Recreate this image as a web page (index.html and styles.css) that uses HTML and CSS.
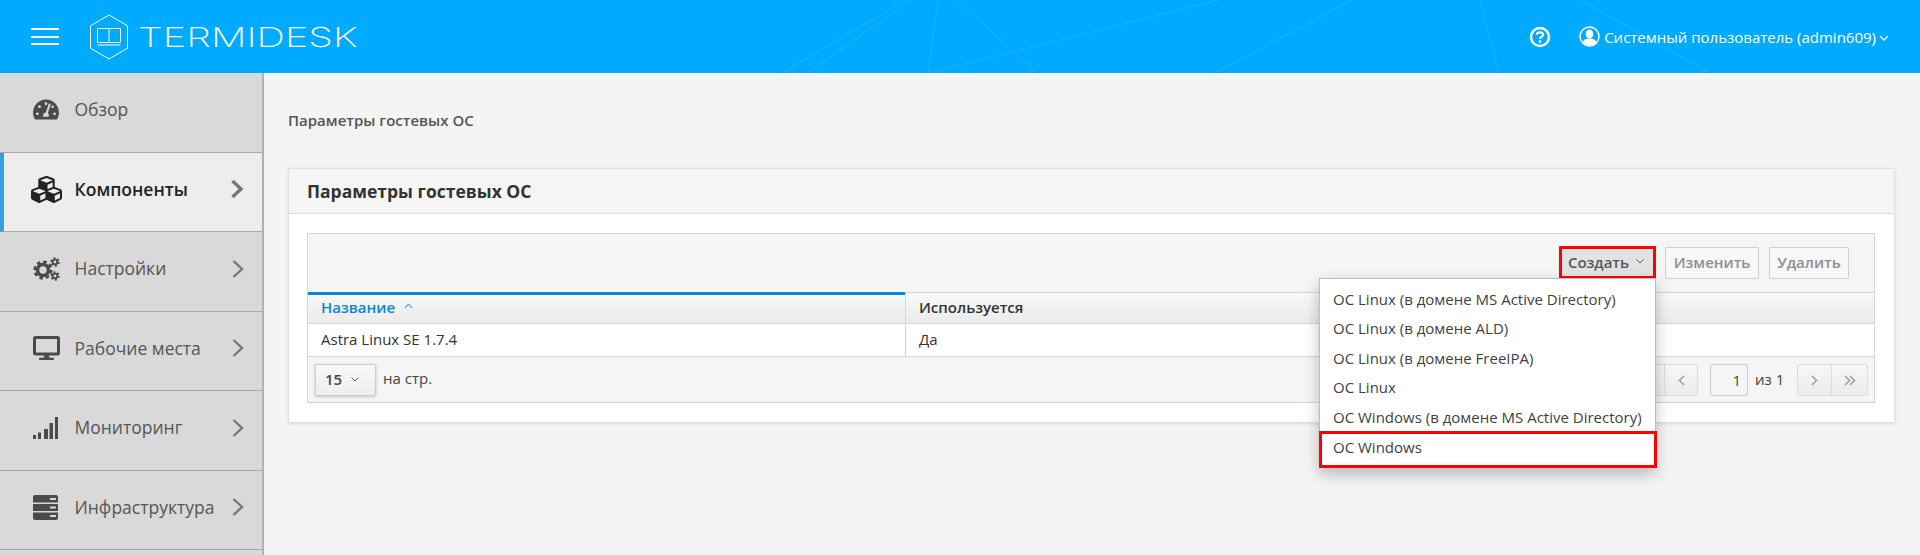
FILE: index.html
```html
<!DOCTYPE html>
<html lang="ru">
<head>
<meta charset="utf-8">
<title>Termidesk</title>
<link rel="stylesheet" href="styles.css">
</head>
<body>
<header class="topbar">
  <svg class="topbar-lines" width="1920" height="73" viewBox="0 0 1920 73">
    <path d="M782 73L906 0M807 73L912 0M928 73L938 0M1037 73L957 0M928 73L1219 0M1215 73L1352 0M1499 73L1480 0M1580 0L1710 73"/>
  </svg>
  <button class="burger" aria-label="Меню"><span></span><span></span><span></span></button>
  <div class="brand">
    <svg class="brand-mark" width="40" height="46" viewBox="0 0 40 46">
      <path d="M20 1L38.500 11.800V34.200L20 45L1.500 34.200V11.800Z"/>
      <path d="M8.500 14.500H31.500V28.500H8.500ZM20 14.500V28.500M8.500 31H31.500" stroke-width="1.300"/>
    </svg>
    <span class="brand-name">TERMIDESK</span>
  </div>
  <div class="topbar-right">
    <svg class="help" width="22" height="22" viewBox="0 0 22 22">
      <circle cx="11" cy="11" r="9" fill="none" stroke="#fff" stroke-width="2.400"/>
      <path d="M7.800 8.800C7.800 5.600 14.200 5.600 14.200 8.800C14.200 10.800 11 10.600 11 13" fill="none" stroke="#fff" stroke-width="2.200"/>
      <rect x="9.800" y="14.300" width="2.400" height="2.400" fill="#fff"/>
    </svg>
    <span class="user">
      <svg width="21" height="21" viewBox="0 0 21 21">
        <circle cx="10.500" cy="10.500" r="9.500" fill="none" stroke="#fff" stroke-width="1.500"/>
        <ellipse cx="10.500" cy="8" rx="3.800" ry="4.500" fill="#fff"/>
        <path d="M3.500 17C4 13.500 7 12.500 10.500 12.500S17 13.500 17.500 17C15.500 19 13 20 10.500 20S5.500 19 3.500 17Z" fill="#fff"/>
      </svg>
      <span class="user-name">Системный пользователь (admin609)</span>
      <svg class="user-caret" width="10" height="6" viewBox="0 0 10 6"><path d="M1 1L5 5L9 1"/></svg>
    </span>
  </div>
</header>
<div class="layout">
  <nav class="sidebar">
    <a class="nav-item">
      <svg class="nav-icon" width="26" height="23" viewBox="0 0 576 512"><path d="M288 32C128.940 32 0 160.940 0 320c0 52.800 14.250 102.260 39.060 144.800 5.610 9.620 16.300 15.200 27.440 15.200h443c11.140 0 21.830-5.580 27.440-15.200C561.750 422.260 576 372.800 576 320c0-159.060-128.940-288-288-288zm0 64c14.710 0 26.580 10.130 30.320 23.650-1.110 2.260-2.640 4.230-3.450 6.670l-9.220 27.670c-5.130 3.490-10.970 6.010-17.640 6.010-17.670 0-32-14.330-32-32S270.330 96 288 96zM96 384c-17.670 0-32-14.330-32-32s14.330-32 32-32 32 14.330 32 32-14.330 32-32 32zm48-160c-17.670 0-32-14.330-32-32s14.330-32 32-32 32 14.330 32 32-14.330 32-32 32zm246.770-72.410l-61.330 184C343.130 347.330 352 364.540 352 384c0 11.720-3.380 22.550-8.880 32H232.880c-5.500-9.450-8.880-20.280-8.880-32 0-33.940 26.500-61.430 59.900-63.590l61.340-184.010c4.170-12.560 17.730-19.450 30.360-15.170 12.570 4.190 19.350 17.770 15.170 30.360zm14.660 57.200l15.520-46.550c3.470-1.290 7.130-2.230 11.050-2.230 17.670 0 32 14.330 32 32s-14.330 32-32 32c-11.380-.010-20.890-6.280-26.570-15.220zM480 384c-17.670 0-32-14.330-32-32s14.330-32 32-32 32 14.330 32 32-14.330 32-32 32z"/></svg>
      <span class="nav-label">Обзор</span>
    </a>
    <a class="nav-item is-active">
      <svg class="nav-icon" width="31" height="31" viewBox="0 0 512 512"><path d="M488.600 250.200L392 214V105.500c0-15-9.300-28.400-23.400-33.700l-100-37.500c-8.100-3.100-17.100-3.100-25.300 0l-100 37.500c-14.100 5.300-23.400 18.700-23.400 33.700V214l-96.600 36.200C9.300 255.500 0 268.900 0 283.900V394c0 13.600 7.700 26.100 19.900 32.200l100 50c10.100 5.100 22.100 5.100 32.200 0l103.900-52 103.900 52c10.100 5.100 22.100 5.100 32.200 0l100-50c12.200-6.100 19.900-18.600 19.900-32.200V283.900c0-15-9.300-28.400-23.400-33.700zM358 214.800l-85 31.900v-68.200l85-37v73.300zM154 104.100l102-38.200 102 38.200v.6l-102 41.400-102-41.400v-.6zm84 291.100l-85 42.500v-79.100l85-38.800v75.400zm0-112l-102 41.400-102-41.400v-.6l102-38.200 102 38.200v.6zm240 112l-85 42.500v-79.100l85-38.800v75.400zm0-112l-102 41.400-102-41.400v-.6l102-38.200 102 38.200v.6z"/></svg>
      <span class="nav-label">Компоненты</span>
      <svg class="nav-chevron" width="14" height="20" viewBox="0 0 14 20"><path d="M2.500 2L11 10L2.500 18"/></svg>
    </a>
    <a class="nav-item">
      <svg class="nav-icon" width="27" height="24" viewBox="0 0 27 24">
        <circle cx="10" cy="13" r="5.500" fill="none" stroke="#4a4a4a" stroke-width="3.600"/>
        <circle cx="10" cy="13" r="8.300" fill="none" stroke="#4a4a4a" stroke-width="2.600" stroke-dasharray="3.600 2.900"/>
        <circle cx="22" cy="5" r="2.300" fill="none" stroke="#4a4a4a" stroke-width="1.800"/>
        <circle cx="22" cy="5" r="3.900" fill="none" stroke="#4a4a4a" stroke-width="1.700" stroke-dasharray="2 2.080"/>
        <circle cx="22" cy="19" r="2.300" fill="none" stroke="#4a4a4a" stroke-width="1.800"/>
        <circle cx="22" cy="19" r="3.900" fill="none" stroke="#4a4a4a" stroke-width="1.700" stroke-dasharray="2 2.080"/>
      </svg>
      <span class="nav-label">Настройки</span>
      <svg class="nav-chevron" width="14" height="20" viewBox="0 0 14 20"><path d="M2.500 2L11 10L2.500 18"/></svg>
    </a>
    <a class="nav-item">
      <svg class="nav-icon" width="27" height="24" viewBox="0 0 576 512"><path d="M528 0H48C21.500 0 0 21.500 0 48v320c0 26.500 21.500 48 48 48h192l-16 48h-72c-13.300 0-24 10.700-24 24s10.700 24 24 24h272c13.300 0 24-10.700 24-24s-10.700-24-24-24h-72l-16-48h192c26.500 0 48-21.500 48-48V48c0-26.500-21.500-48-48-48zm-16 352H64V64h448v288z"/></svg>
      <span class="nav-label">Рабочие места</span>
      <svg class="nav-chevron" width="14" height="20" viewBox="0 0 14 20"><path d="M2.500 2L11 10L2.500 18"/></svg>
    </a>
    <a class="nav-item">
      <svg class="nav-icon" width="25" height="22" viewBox="0 0 25 22"><path d="M0 18h3v4H0zM5 15.500h3V22H5zM11 12h4v10h-4zM16.500 6h3.500v16h-3.500zM22 0h3v22h-3z"/></svg>
      <span class="nav-label">Мониторинг</span>
      <svg class="nav-chevron" width="14" height="20" viewBox="0 0 14 20"><path d="M2.500 2L11 10L2.500 18"/></svg>
    </a>
    <a class="nav-item">
      <svg class="nav-icon" width="25" height="25" viewBox="0 0 25 25"><path fill-rule="evenodd" d="M2 0h21a2 2 0 0 1 2 2v5.500H0V2a2 2 0 0 1 2-2zM0 9h25v7H0zM0 17.500h25V23a2 2 0 0 1-2 2H2a2 2 0 0 1-2-2zM17 3v2h6V3zM17 11.500v2h6v-2zM17 20v2h6v-2z"/></svg>
      <span class="nav-label">Инфраструктура</span>
      <svg class="nav-chevron" width="14" height="20" viewBox="0 0 14 20"><path d="M2.500 2L11 10L2.500 18"/></svg>
    </a>
  </nav>
  <main class="content">
    <div class="breadcrumb">Параметры гостевых ОС</div>
    <section class="panel">
      <h1 class="panel-title">Параметры гостевых ОС</h1>
      <div class="panel-body">
        <div class="grid">
          <div class="toolbar">
            <div class="create-wrap">
              <button class="btn btn-create">Создать
                <svg class="caret" width="8" height="5" viewBox="0 0 8 5"><path d="M.5 .5L4 4L7.500 .5"/></svg>
              </button>
              <ul class="menu">
                <li>ОС Linux (в домене MS Active Directory)</li>
                <li>ОС Linux (в домене ALD)</li>
                <li>ОС Linux (в домене FreeIPA)</li>
                <li>ОС Linux</li>
                <li>ОС Windows (в домене MS Active Directory)</li>
                <li class="menu-marked">ОС Windows</li>
              </ul>
            </div>
            <button class="btn btn-off">Изменить</button>
            <button class="btn btn-off">Удалить</button>
          </div>
          <div class="row head">
            <div class="cell col-name sorted">Название <svg class="sort" width="9" height="6" viewBox="0 0 9 6"><path d="M.8 5L4.500 1L8.200 5"/></svg></div>
            <div class="cell col-used">Используется</div>
          </div>
          <div class="row body-row">
            <div class="cell col-name">Astra Linux SE 1.7.4</div>
            <div class="cell col-used">Да</div>
          </div>
          <div class="footer">
            <button class="page-size">15
              <svg class="caret" width="8" height="5" viewBox="0 0 8 5"><path d="M.5 .5L4 4L7.500 .5"/></svg>
            </button>
            <span class="per-page">на стр.</span>
            <div class="pager">
              <div class="pager-group">
                <span class="pager-btn"><svg width="13" height="13" viewBox="0 0 13 13"><path d="M6 2L1.500 6.500L6 11M11 2L6.500 6.500L11 11"/></svg></span>
                <span class="pager-btn"><svg width="9" height="13" viewBox="0 0 9 13"><path d="M7 2L2.500 6.500L7 11"/></svg></span>
              </div>
              <span class="page-input">1</span>
              <span class="page-total">из 1</span>
              <div class="pager-group">
                <span class="pager-btn"><svg width="9" height="13" viewBox="0 0 9 13"><path d="M2 2L6.500 6.500L2 11"/></svg></span>
                <span class="pager-btn pager-last"><svg width="13" height="13" viewBox="0 0 13 13"><path d="M2 2L6.500 6.500L2 11M7 2L11.500 6.500L7 11"/></svg></span>
              </div>
            </div>
          </div>
        </div>
      </div>
    </section>
  </main>
</div>
</body>
</html>
```
FILE: styles.css
```css
* { box-sizing: border-box; }
html, body { margin: 0; height: 555px; overflow: hidden; }
body { font-family: "Open Sans", "Liberation Sans", sans-serif; font-size: 15px; color: #333; background: #f4f4f4; }
button { font-family: inherit; }

.topbar { position: relative; height: 73px; background: #00aaff; display: flex; align-items: center; color: #fff; overflow: hidden; }
.topbar-lines { position: absolute; left: 0; top: 0; }
.topbar-lines path { fill: none; stroke: #12b1ff; stroke-width: 1.500; }
.burger { position: relative; width: 28px; height: 17px; margin-left: 31px; padding: 0; border: 0; background: none; display: flex; flex-direction: column; justify-content: space-between; }
.burger span { display: block; height: 2px; background: #fff; }
.brand { position: relative; display: flex; align-items: center; margin-left: 30px; }
.brand-mark { display: block; }
.brand-mark path { fill: none; stroke: #fff; stroke-width: 1; }
.brand-name { display: inline-block; margin-left: 9px; font-family: "Inter", sans-serif; font-weight: 200; font-size: 27.500px; line-height: 30px; transform: scaleX(1.440); transform-origin: left center; }
.topbar-right { position: relative; margin-left: auto; display: flex; align-items: center; padding-right: 31px; }
.help { display: block; margin-right: 28px; }
.user { display: flex; align-items: center; }
.user-name { margin-left: 4px; font-size: 15px; line-height: 20px; }
.user-caret { margin-left: 3px; margin-top: 3px; }
.user-caret path { fill: none; stroke: #fff; stroke-width: 1.300; }

.layout { display: flex; height: 482px; }
.sidebar { width: 264px; flex: none; background: #d9d9d9; border-right: 2px solid #b0b0b0; }
.nav-item { display: flex; align-items: center; height: 79.500px; padding: 0 17px 5px 33px; border-bottom: 1px solid #a8a8a8; color: #555; font-size: 17.500px; position: relative; }
.nav-icon { fill: #4a4a4a; display: block; flex: none; }
.nav-label { position: absolute; left: 74.500px; margin-top: -1px; }
.nav-chevron { margin-left: auto; fill: none; stroke: #777; stroke-width: 2.400; }
.is-active { background: #ededed; border-left: 4px solid #3aa0dc; padding-left: 27px; color: #222; font-weight: 600; }
.is-active .nav-icon { fill: #222; }
.is-active .nav-label { left: 70.500px; margin-top: 0; }
.is-active .nav-chevron { stroke-width: 3.400; margin-right: 1px; }

.content { flex: 1; padding: 0 25px 0 24px; min-width: 0; }
.breadcrumb { height: 95px; padding-top: 37px; font-size: 15px; line-height: 20px; font-weight: 600; color: #555; }
.panel { background: #fff; border: 1px solid #e0e0e0; box-shadow: 0 1px 3px rgba(0,0,0,.1); height: 255px; }
.panel-title { margin: 0; height: 45px; padding-left: 18px; background: #f5f5f5; border-bottom: 1px solid #dedede; font-size: 17.500px; line-height: 44px; font-weight: 700; color: #333; }
.panel-body { padding: 19px 19px 0 18px; }
.grid { border: 1px solid #d4d4d4; background: #f5f5f5; height: 170px; }

.toolbar { height: 58px; display: flex; justify-content: flex-end; align-items: flex-start; gap: 10px; padding: 13px 25px 0 0; }
.btn { height: 32px; padding: 0 0 2px; font-size: 15px; line-height: 20px; background: #f7f7f7; border: 1px solid #d2d2d2; border-radius: 1px; font-weight: 600; }
.btn-off { color: #8f8f8f; width: 94px; }
.btn-off:last-child { width: 80px; }
.create-wrap { position: relative; margin-right: -1px; }
.btn-create { width: 97px; height: 33px; margin-top: -1px; padding-right: 3px; border: 3px solid #f00; background: #e2e2e2; color: #555; display: flex; align-items: center; justify-content: center; gap: 7px; }
.caret { fill: none; stroke: #555; stroke-width: 1; }
.menu { position: absolute; z-index: 5; right: 0; top: 31px; width: 337px; height: 190px; margin: 0; padding: 6px 0 0; list-style: none; background: #fff; border: 1px solid #bdbdbd; box-shadow: 0 6px 14px rgba(0,0,0,.25); }
.menu li { height: 29.400px; padding-left: 13px; font-size: 15px; line-height: 29.400px; color: #3f3f3f; white-space: nowrap; }
.menu .menu-marked { position: absolute; left: -1px; right: -2px; top: 152px; bottom: -1px; height: auto; border: 3px solid #f00; padding-left: 11px; line-height: 26px; }

.row { display: flex; }
.head { height: 32px; background: linear-gradient(#f9f9f9, #ebebeb); border-top: 1px solid #d4d4d4; border-bottom: 1px solid #d4d4d4; font-weight: 600; color: #333; }
.body-row { height: 33px; background: #fff; border-bottom: 1px solid #d4d4d4; }
.cell { padding-left: 11px; line-height: 30px; }
.head .col-used { line-height: 28px; }
.col-name { width: 597px; flex: none; }
.col-used { flex: 1; border-left: 1px solid #d4d4d4; padding-left: 13px; }
.sorted { color: #0a84d6; border-top: 3px solid #0088d4; margin-top: -1px; height: 32px; line-height: 25px; padding-left: 13px; }
.body-row .col-name { padding-left: 13px; }
.sort { margin-left: 5px; vertical-align: 4px; fill: none; stroke: #0a84d6; stroke-width: 1; }

.footer { position: relative; height: 46px; display: flex; align-items: flex-start; padding: 7px 6px 0 7px; }
.page-size { width: 61px; height: 32px; padding: 0 0 2px 9px; display: flex; align-items: center; gap: 9px; font-size: 15px; font-weight: 600; color: #444; background: linear-gradient(#f9f9f9, #eeeeee); border: 1px solid #ccc; border-radius: 1px; box-shadow: 0 1px 3px rgba(0,0,0,.2); }
.per-page { margin-left: 7px; line-height: 28px; color: #444; }
.pager { margin-left: auto; display: flex; align-items: flex-start; }
.pager-group { display: flex; height: 32px; border: 1px solid #dcdcdc; border-radius: 2px; background: linear-gradient(#f6f6f6, #ededed); }
.pager-btn { width: 33px; display: flex; align-items: center; justify-content: center; border-left: 1px solid #dcdcdc; }
.pager-btn:first-child { border-left: 0; }
.pager-last { width: 36px; }
.pager-btn svg { fill: none; stroke: #a0a0a0; stroke-width: 1.600; }
.page-input { width: 38px; height: 32px; margin-left: 12px; padding-right: 6px; border: 1px solid #ccc; border-radius: 2px; text-align: right; line-height: 30px; color: #444; background: #f5f5f5; }
.page-total { width: 49px; padding-left: 7px; line-height: 30px; color: #444; }
```
